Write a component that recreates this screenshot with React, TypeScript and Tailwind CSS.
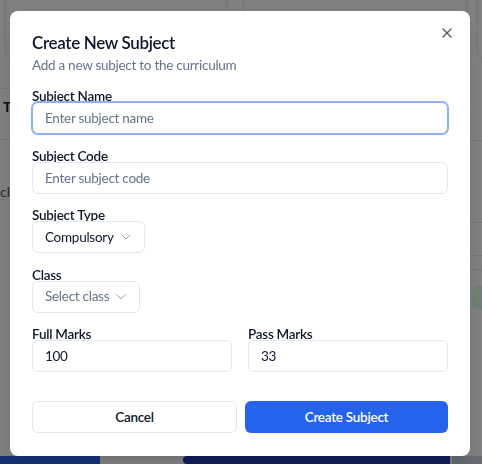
import { X, ChevronDown } from "lucide-react";

const font = { fontFamily: 'Lato, "Noto Sans", sans-serif' };

function Field({ label, children }: { label: string; children: React.ReactNode }) {
  return (
    <div className="flex flex-col">
      <label className="h-[14px] text-[13.5px] font-semibold leading-[17px] tracking-[-0.02em] text-[#0f172a]">{label}</label>
      {children}
    </div>
  );
}

function TextInput({ placeholder, value, focused }: { placeholder?: string; value?: string; focused?: boolean }) {
  return (
    <input
      readOnly
      placeholder={placeholder}
      defaultValue={value}
      className={
        "h-8 w-full rounded-md border bg-white px-3 text-[13.5px] tracking-[-0.02em] text-[#0f172a] placeholder:text-[#64748b] outline-none " +
        (focused ? "border-[#8fb0f3] ring-1 ring-[#8fb0f3]" : "border-[#e2e8f0]")
      }
    />
  );
}

function SelectBox({ text, placeholder }: { text: string; placeholder?: boolean }) {
  return (
    <button
      type="button"
      className={
        "flex h-8 w-fit items-center gap-[4px] rounded-md border border-[#e2e8f0] bg-white pl-3 pr-[10px] text-[13.5px] tracking-[-0.02em] " +
        (placeholder ? "text-[#64748b]" : "text-[#0f172a]")
      }
    >
      <span>{text}</span>
      <ChevronDown className="h-4 w-4 text-[#0f172a] opacity-40" strokeWidth={1.5} />
    </button>
  );
}

function Background() {
  return (
    <div className="flex h-[464px] w-full flex-col overflow-hidden bg-white">
      <div className="-mt-10 grid grid-cols-[222px_230px_40px] gap-[10px] pl-[5px] pr-0">
        <div className="h-[100px] rounded-lg border border-[#e5e7eb]" />
        <div className="ml-[6px] h-[100px] rounded-lg border border-[#e5e7eb]" />
        <div className="h-[100px] rounded-lg border border-[#e5e7eb]" />
      </div>
      <div className="mt-[28px] flex flex-1">
        <div className="flex w-[240px] flex-col">
          <div className="h-[52px] border-y border-[#e5e7eb] pl-[3px] pt-[8px] text-sm font-bold text-[#111827]">Type</div>
          <div className="h-[60px] border-b border-[#e5e7eb]" />
          <div className="h-[55px] border-b border-[#e5e7eb] text-sm text-[#475569]" style={{ marginTop: -60 }}>
            <div className="pt-[42px]">class</div>
          </div>
          <div className="h-[60px]" />
          <div className="flex-1" />
          <div className="flex h-[8px] items-end gap-[40px]">
            <div className="h-[8px] w-[100px] bg-[#2563eb]" />
          </div>
        </div>
        <div className="flex flex-1 flex-col">
          <div className="h-[52px]" />
          <div className="h-[82px] border-t border-[#e5e7eb]" />
          <div className="h-[33px] border-t border-[#e5e7eb]" />
          <div className="h-[15px] border-y border-[#e5e7eb]" />
          <div className="flex h-[55px] items-center justify-end">
            <div className="h-[24px] w-[10px] rounded-l-md bg-[#dcfce7]" />
          </div>
          <div className="flex-1" />
          <div className="flex h-[8px] justify-start gap-[2px]">
            <div className="ml-[-54px] h-[8px] w-[267px] rounded-l-full bg-[#1e40af]" />
            <div className="h-[8px] w-[30px] bg-[#cbd5e1]" />
          </div>
        </div>
      </div>
    </div>
  );
}

export default function App() {
  return (
    <div className="relative h-[464px] w-full overflow-hidden" style={font}>
      <Background />
      <div className="fixed inset-0 bg-black/50" />
      <div className="fixed left-[10px] top-[11px] w-[460px] rounded-lg bg-white p-[22px] pb-[23px] shadow-lg">
        <button type="button" className="absolute right-[15px] top-[14px] text-[#0f172a] opacity-70">
          <X className="h-4 w-4" strokeWidth={2} />
        </button>
        <div className="flex flex-col gap-1">
          <h2 className="h-[18px] text-[17px] font-semibold leading-[20px] tracking-[-0.02em] text-[#0f172a]">Create New Subject</h2>
          <p className="text-[13.5px] leading-5 tracking-[-0.02em] text-[#64748b]">Add a new subject to the curriculum</p>
        </div>
        <div className="mt-[13px] flex flex-col gap-[13.5px]">
          <Field label="Subject Name">
            <TextInput placeholder="Enter subject name" focused />
          </Field>
          <Field label="Subject Code">
            <TextInput placeholder="Enter subject code" />
          </Field>
          <Field label="Subject Type">
            <SelectBox text="Compulsory" />
          </Field>
          <Field label="Class">
            <SelectBox text="Select class" placeholder />
          </Field>
          <div className="grid grid-cols-2 gap-4">
            <Field label="Full Marks">
              <TextInput value="100" />
            </Field>
            <Field label="Pass Marks">
              <TextInput value="33" />
            </Field>
          </div>
        </div>
        <div className="mt-[29px] flex gap-2">
          <button type="button" className="h-8 flex-1 rounded-md border border-[#e2e8f0] bg-white text-[13.5px] font-semibold tracking-[-0.02em] text-[#0f172a]">
            Cancel
          </button>
          <button type="button" className="h-8 flex-1 rounded-md bg-[#2563eb] text-[13.5px] font-semibold tracking-[-0.02em] text-white">
            Create Subject
          </button>
        </div>
      </div>
    </div>
  );
}
